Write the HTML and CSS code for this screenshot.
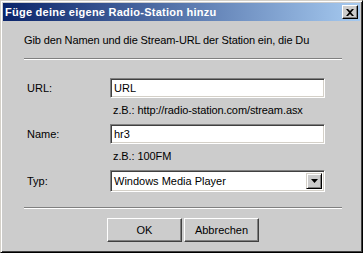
FILE: index.html
```html
<!DOCTYPE html>
<html lang="de">
<head>
  <meta charset="UTF-8" />
  <title>Radio-Station hinzufügen</title>
  <link rel="stylesheet" href="styles.css">
</head>
<body>
  <div class="window">
    <div class="titlebar">
      <span class="title">Füge deine eigene Radio-Station hinzu</span>
      <button class="close" aria-label="Schließen">
        <svg width="8" height="7" viewBox="0 0 8 7"><path d="M0 0h2l2 2 2-2h2L5 3.5 8 7H6L4 5 2 7H0l3-3.5z" fill="#000"/></svg>
      </button>
    </div>

    <div class="content">
      <p class="intro">Gib den Namen und die Stream-URL der Station ein, die Du</p>
      <div class="separator"></div>

      <div class="row first">
        <label for="url">URL:</label>
        <input id="url" class="field" type="text" value="URL">
      </div>
      <div class="hint">z.B.: http://radio-station.com/stream.asx</div>

      <div class="row">
        <label for="name">Name:</label>
        <input id="name" class="field" type="text" value="hr3">
      </div>
      <div class="hint">z.B.: 100FM</div>

      <div class="row">
        <label>Typ:</label>
        <div class="select">
          <span class="select-value">Windows Media Player</span>
          <span class="select-btn">
            <svg width="7" height="4" viewBox="0 0 7 4"><path d="M0 0h7L3.5 4z" fill="#000"/></svg>
          </span>
        </div>
      </div>

      <div class="separator bottom"></div>

      <div class="buttons">
        <button class="btn">OK</button>
        <button class="btn">Abbrechen</button>
      </div>
    </div>
  </div>
</body>
</html>
```

FILE: styles.css
```css
:root {
  --face: #cccccc;
  --light: #d4d0c8;
  --shadow: #808080;
  --dark: #404040;
  --text: #000000;
}

* {
  box-sizing: border-box;
  margin: 0;
  padding: 0;
}

body {
  font-family: "Liberation Sans", Arial, sans-serif;
  font-size: 11px;
  color: var(--text);
  background: var(--face);
}

.window {
  width: 363px;
  height: 253px;
  background: var(--face);
  border: 1px solid;
  border-color: var(--light) #000 #000 var(--light);
  box-shadow: inset 1px 1px 0 #fff, inset -1px -1px 0 var(--dark);
  padding: 2px;
}

.titlebar {
  height: 18px;
  display: flex;
  align-items: center;
  justify-content: space-between;
  padding: 0 2px 0 2px;
  background: linear-gradient(to right, #0a246a, #a6caf0);
}

.title {
  color: #fff;
  font-weight: bold;
  font-size: 11px;
  letter-spacing: 0.25px;
}

.close {
  width: 16px;
  height: 14px;
  display: flex;
  align-items: center;
  justify-content: center;
  background: var(--face);
  border: 1px solid;
  border-color: #fff #000 #000 #fff;
  box-shadow: inset -1px -1px 0 var(--shadow);
}

.content {
  padding: 13px 0 0 21px;
}

.intro {
  line-height: 13px;
  height: 13px;
  letter-spacing: -0.12px;
}

.separator {
  width: 318px;
  height: 2px;
  margin-top: 11px;
  border-top: 1px solid var(--shadow);
  border-bottom: 1px solid #fff;
}

.separator.bottom {
  margin-top: 15px;
}

.row {
  display: flex;
  align-items: center;
  margin-top: 7px;
}

.row.first {
  margin-top: 18px;
}

.row label {
  width: 86px;
  padding-left: 3px;
}

.field,
.select {
  width: 215px;
  background: #fff;
  border: 1px solid;
  border-color: var(--shadow) #fff #fff var(--shadow);
  box-shadow: inset 1px 1px 0 var(--dark), inset -1px -1px 0 var(--light);
}

.field {
  height: 20px;
  padding: 0 3px;
  font: inherit;
  color: var(--text);
  outline: none;
}

.select {
  height: 22px;
  display: flex;
  align-items: center;
  justify-content: space-between;
  padding: 2px;
}

.select-value {
  padding-left: 1px;
}

.select-btn {
  width: 16px;
  height: 16px;
  display: flex;
  align-items: center;
  justify-content: center;
  background: var(--face);
  border: 1px solid;
  border-color: var(--light) #000 #000 var(--light);
  box-shadow: inset 1px 1px 0 #fff, inset -1px -1px 0 var(--shadow);
}

.hint {
  margin-top: 6px;
  padding-left: 89px;
  line-height: 13px;
  letter-spacing: -0.1px;
}

.buttons {
  display: flex;
  gap: 2px;
  margin-top: 9px;
  padding-left: 83px;
}

.btn {
  width: 75px;
  height: 24px;
  font: inherit;
  color: var(--text);
  background: var(--face);
  border: 1px solid;
  border-color: #fff var(--dark) var(--dark) #fff;
  box-shadow: inset -1px -1px 0 var(--shadow);
}
```
